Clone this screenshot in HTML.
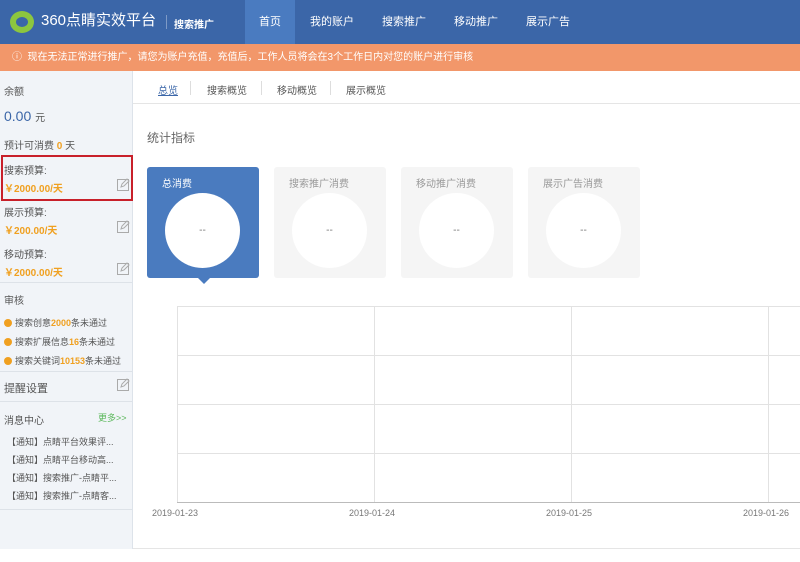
<!DOCTYPE html>
<html><head><meta charset="utf-8"><style>
*{margin:0;padding:0;box-sizing:border-box}
body{width:800px;height:562px;overflow:hidden;background:#fff;font-family:"Liberation Sans","Noto Sans CJK SC",sans-serif;font-size:10px;color:#555;position:relative}
.hd{position:absolute;left:0;top:0;width:800px;height:44px;background:#3b66a8}
.nav{position:absolute;top:0;height:44px;line-height:44px;color:#fff;font-size:11px;text-align:center}
.ban{position:absolute;top:44px;left:0;width:800px;height:27px;background:#f2976a;color:#fff;line-height:27px;font-size:10px;padding-left:12px}
.sb{position:absolute;left:0;top:71px;width:133px;height:478px;background:#f1f4f8;border-right:1px solid #dde3ea}
.a{position:absolute;left:4px;font-size:10px;color:#555}
.o{color:#f0a020;font-weight:bold}
.hr{position:absolute;left:0;width:132px;height:1px;background:#dde2e8}
.ed{position:absolute;left:117px}
.dot{display:inline-block;width:8px;height:8px;border-radius:50%;background:#f0a020;margin-right:3px;vertical-align:-1px}
.card{position:absolute;top:167px;width:112px;height:111px;background:#f5f5f5;border-radius:3px}
.card span{position:absolute;left:15px;top:8px;font-size:10px;color:#999}
.card i{position:absolute;left:18px;top:26px;width:75px;height:75px;border-radius:50%;background:#fff;font-style:normal;text-align:center;line-height:75px;color:#777}
.gv{position:absolute;top:306px;width:1px;height:197px;background:#e2e2e2}
.gh{position:absolute;left:177px;width:623px;height:1px;background:#e2e2e2}
.dt{position:absolute;top:508px;font-size:9px;color:#777}
</style></head><body>
<div class="hd"></div>
<svg style="position:absolute;left:9px;top:10px" width="26" height="24"><ellipse cx="13" cy="12" rx="12" ry="11" fill="#8cc63f"/><ellipse cx="13" cy="12" rx="6" ry="5" fill="#3b66a8"/></svg>
<div style="position:absolute;left:41px;top:11px;color:#fff;font-size:15px;line-height:20px;white-space:nowrap">360点睛实效平台</div>
<div style="position:absolute;left:166px;top:15px;width:1px;height:14px;background:#7e9ac6"></div>
<div style="position:absolute;left:174px;top:16px;color:#fff;font-size:10px;font-weight:bold;white-space:nowrap">搜索推广</div>
<div class="nav" style="left:245px;width:50px;background:#4a7bc0">首页</div>
<div class="nav" style="left:300px;width:64px">我的账户</div>
<div class="nav" style="left:372px;width:64px">搜索推广</div>
<div class="nav" style="left:444px;width:64px">移动推广</div>
<div class="nav" style="left:516px;width:64px">展示广告</div>
<div class="ban">ⓘ &nbsp;现在无法正常进行推广，请您为账户充值，充值后，工作人员将会在3个工作日内对您的账户进行审核</div>
<div class="sb">
<div class="a" style="top:12px">余额</div>
<div class="a" style="top:37px;font-size:14px;color:#3b66a8">0.00 <span style="font-size:10px;color:#555">元</span></div>
<div class="a" style="top:66px">预计可消费 <span class="o">0</span> 天</div>
<div style="position:absolute;left:1px;top:84px;width:132px;height:46px;border:2px solid #c8202a"></div>
<div class="a" style="top:91px">搜索预算:</div>
<div class="a o" style="top:109px">￥2000.00/天</div>
<svg class="ed" style="top:107px" width="13" height="13"><rect x="0.5" y="1.5" width="11" height="11" fill="none" stroke="#aaa"/><path d="M4 9l1-3 5-5 2 2-5 5z" fill="#f1f4f8" stroke="#aaa"/></svg>
<div class="a" style="top:133px">展示预算:</div>
<div class="a o" style="top:151px">￥200.00/天</div>
<svg class="ed" style="top:149px" width="13" height="13"><rect x="0.5" y="1.5" width="11" height="11" fill="none" stroke="#aaa"/><path d="M4 9l1-3 5-5 2 2-5 5z" fill="#f1f4f8" stroke="#aaa"/></svg>
<div class="a" style="top:175px">移动预算:</div>
<div class="a o" style="top:193px">￥2000.00/天</div>
<svg class="ed" style="top:191px" width="13" height="13"><rect x="0.5" y="1.5" width="11" height="11" fill="none" stroke="#aaa"/><path d="M4 9l1-3 5-5 2 2-5 5z" fill="#f1f4f8" stroke="#aaa"/></svg>
<div class="hr" style="top:211px"></div>
<div class="a" style="top:221px">审核</div>
<div class="a" style="top:245px;font-size:9px"><span class="dot"></span>搜索创意<span class="o">2000</span>条未通过</div>
<div class="a" style="top:264px;font-size:9px"><span class="dot"></span>搜索扩展信息<span class="o">16</span>条未通过</div>
<div class="a" style="top:283px;font-size:9px"><span class="dot"></span>搜索关键词<span class="o">10153</span>条未通过</div>
<div class="hr" style="top:300px"></div>
<div class="a" style="top:309px;font-size:11px">提醒设置</div>
<svg class="ed" style="top:307px" width="13" height="13"><rect x="0.5" y="1.5" width="11" height="11" fill="none" stroke="#aaa"/><path d="M4 9l1-3 5-5 2 2-5 5z" fill="#f1f4f8" stroke="#aaa"/></svg>
<div class="hr" style="top:330px"></div>
<div class="a" style="top:341px">消息中心</div>
<div class="a" style="top:340px;left:98px;color:#5cb85c;font-size:9px">更多&gt;&gt;</div>
<div class="a" style="top:364px;left:7px;font-size:9px">【通知】点睛平台效果评...</div>
<div class="a" style="top:382px;left:7px;font-size:9px">【通知】点睛平台移动高...</div>
<div class="a" style="top:400px;left:7px;font-size:9px">【通知】搜索推广-点睛平...</div>
<div class="a" style="top:418px;left:7px;font-size:9px">【通知】搜索推广-点睛客...</div>
<div class="hr" style="top:438px"></div>
</div>
<div style="position:absolute;left:133px;top:103px;width:667px;height:1px;background:#e5e5e5"></div>
<div style="position:absolute;left:158px;top:82px;color:#3b66a8;text-decoration:underline">总览</div>
<div style="position:absolute;left:190px;top:81px;width:1px;height:14px;background:#ddd"></div>
<div style="position:absolute;left:207px;top:82px">搜索概览</div>
<div style="position:absolute;left:261px;top:81px;width:1px;height:14px;background:#ddd"></div>
<div style="position:absolute;left:277px;top:82px">移动概览</div>
<div style="position:absolute;left:330px;top:81px;width:1px;height:14px;background:#ddd"></div>
<div style="position:absolute;left:346px;top:82px">展示概览</div>
<div style="position:absolute;left:147px;top:129px;font-size:12px;color:#666">统计指标</div>
<div class="card" style="left:147px;background:#4a7bbf"><span style="color:#fff">总消费</span><i>--</i></div>
<div style="position:absolute;left:198px;top:278px;border:6px solid transparent;border-top-color:#4a7bbf"></div>
<div class="card" style="left:274px"><span>搜索推广消费</span><i>--</i></div>
<div class="card" style="left:401px"><span>移动推广消费</span><i>--</i></div>
<div class="card" style="left:528px"><span>展示广告消费</span><i>--</i></div>
<div class="gv" style="left:177px"></div><div class="gv" style="left:374px"></div><div class="gv" style="left:571px"></div><div class="gv" style="left:768px"></div>
<div class="gh" style="top:306px"></div><div class="gh" style="top:355px"></div><div class="gh" style="top:404px"></div><div class="gh" style="top:453px"></div>
<div class="gh" style="top:502px;background:#bbb"></div>
<div class="dt" style="left:152px">2019-01-23</div>
<div class="dt" style="left:349px">2019-01-24</div>
<div class="dt" style="left:546px">2019-01-25</div>
<div class="dt" style="left:743px">2019-01-26</div>
<div style="position:absolute;left:133px;top:548px;width:667px;height:1px;background:#e5e5e5"></div>
</body></html>
